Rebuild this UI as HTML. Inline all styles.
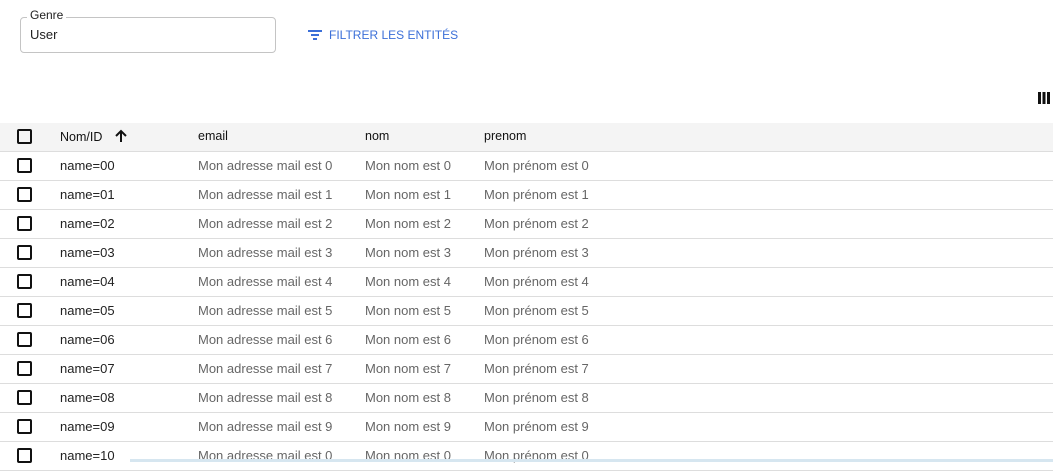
<!DOCTYPE html><html><head><style>
body{margin:0;width:1053px;height:462px;overflow:hidden;background:#fff;font-family:"Liberation Sans",sans-serif;position:relative}
.fs{position:absolute;left:20px;top:17px;width:254px;height:34px;border:1px solid #c4c4c4;border-radius:4px}
.lg{position:absolute;left:27px;top:8px;background:#fff;padding:0 3px;font-size:12px;color:#222}
.val{position:absolute;left:30px;top:27px;font-size:13px;color:#222}
.btn{position:absolute;left:308px;top:28px;font-size:12px;color:#3b6fd8;font-weight:500}
.col{position:absolute;right:3px;top:92px}
.hdr{position:absolute;left:0;top:123px;width:1053px;height:28px;background:#f4f4f4;border-bottom:1px solid #ddd}
.row{position:absolute;left:0;width:1053px;height:28px;border-bottom:1px solid #ddd}
.cb{position:absolute;left:17px;top:6px;width:11px;height:11px;border:2px solid #111;border-radius:2px}
.c{position:absolute;top:6px;font-size:13px;color:#666;white-space:nowrap}
.h .c{color:#111;font-size:12.5px}
.n{color:#222!important}
</style></head><body>
<div class="fs"></div><div class="lg">Genre</div><div class="val">User</div>
<div class="btn"><svg width="14" height="10" style="vertical-align:-1px;margin-right:7px"><rect x="0" y="0" width="14" height="2" fill="#3b6fd8"/><rect x="3" y="4" width="8" height="2" fill="#3b6fd8"/><rect x="5" y="8" width="4" height="2" fill="#3b6fd8"/></svg>FILTRER LES ENTITÉS</div>
<svg class="col" width="12" height="12"><rect x="0" y="0" width="3" height="12" fill="#111"/><rect x="4.5" y="0" width="3" height="12" fill="#111"/><rect x="9" y="0" width="3" height="12" fill="#111"/></svg>
<div class="hdr h"><div class="cb"></div><div class="c" style="left:60px">Nom/ID <svg width="14" height="14" style="vertical-align:-2px;margin-left:8px"><path d="M7 13V2M2 7l5-5 5 5" stroke="#111" stroke-width="2" fill="none"/></svg></div><div class="c" style="left:198px">email</div><div class="c" style="left:365px">nom</div><div class="c" style="left:484px">prenom</div></div>
<div id="rows"></div>
<div style="position:absolute;left:130px;top:459px;width:923px;height:3px;background:#d6e6f0"></div>
<script>
var h='';for(var i=0;i<11;i++){var k=i%10;var nm=i<10?'0'+i:'10';h+='<div class="row" style="top:'+(152+i*29)+'px"><div class="cb"></div><div class="c n" style="left:60px">name='+nm+'</div><div class="c" style="left:198px">Mon adresse mail est '+k+'</div><div class="c" style="left:365px">Mon nom est '+k+'</div><div class="c" style="left:484px">Mon prénom est '+k+'</div></div>';}
document.getElementById('rows').innerHTML=h;
</script>
</body></html>
